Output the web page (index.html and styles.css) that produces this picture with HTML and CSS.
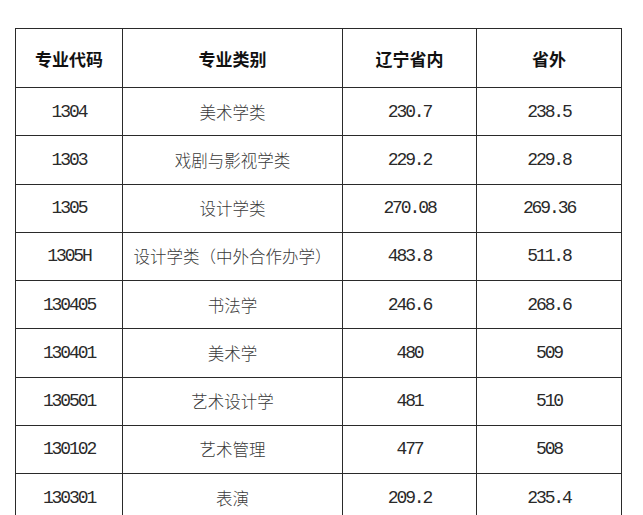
FILE: index.html
```html
<!DOCTYPE html>
<html lang="zh-CN">
<head>
<meta charset="utf-8">
<link rel="stylesheet" href="styles.css">
</head>
<body>
<div class="page">
<table class="scores">
  <colgroup>
    <col class="c-code"><col class="c-name"><col class="c-in"><col class="c-out">
  </colgroup>
  <thead>
    <tr><th>专业代码</th><th>专业类别</th><th>辽宁省内</th><th>省外</th></tr>
  </thead>
  <tbody>
    <tr><td class="num">1304</td><td>美术学类</td><td class="num">230.7</td><td class="num">238.5</td></tr>
    <tr><td class="num">1303</td><td>戏剧与影视学类</td><td class="num">229.2</td><td class="num">229.8</td></tr>
    <tr><td class="num">1305</td><td>设计学类</td><td class="num">270.08</td><td class="num">269.36</td></tr>
    <tr><td class="num">1305H</td><td>设计学类（中外合作办学）</td><td class="num">483.8</td><td class="num">511.8</td></tr>
    <tr><td class="num">130405</td><td>书法学</td><td class="num">246.6</td><td class="num">268.6</td></tr>
    <tr><td class="num">130401</td><td>美术学</td><td class="num">480</td><td class="num">509</td></tr>
    <tr><td class="num">130501</td><td>艺术设计学</td><td class="num">481</td><td class="num">510</td></tr>
    <tr><td class="num">130102</td><td>艺术管理</td><td class="num">477</td><td class="num">508</td></tr>
    <tr><td class="num">130301</td><td>表演</td><td class="num">209.2</td><td class="num">235.4</td></tr>
  </tbody>
</table>
</div>
</body>
</html>
```

FILE: styles.css
```css
html, body {
  margin: 0;
  padding: 0;
  background: #ffffff;
}
.page {
  padding: 28px 0 0 15px;
}
.scores {
  border-collapse: collapse;
  table-layout: fixed;
  width: 606px;
  font-family: "Noto Sans CJK SC", sans-serif;
}
.c-code { width: 107px; }
.c-name { width: 220px; }
.c-in { width: 134px; }
.c-out { width: 145px; }
.scores th,
.scores td {
  border: 1px solid #2a2a2a;
  text-align: center;
  vertical-align: middle;
  padding: 0;
  white-space: nowrap;
}
.scores th {
  height: 58px;
  font-size: 17px;
  font-weight: 700;
  color: #111;
}
.scores td {
  height: 47.25px;
  font-size: 16.5px;
  font-weight: 300;
  color: #3a3a3a;
}
.scores td.num {
  font-family: "Liberation Mono", monospace;
  font-size: 18px;
  font-weight: 400;
  letter-spacing: -2.1px;
  color: #2a2a2a;
}
.scores tbody tr:last-child td {
  border-bottom: none;
}
```
